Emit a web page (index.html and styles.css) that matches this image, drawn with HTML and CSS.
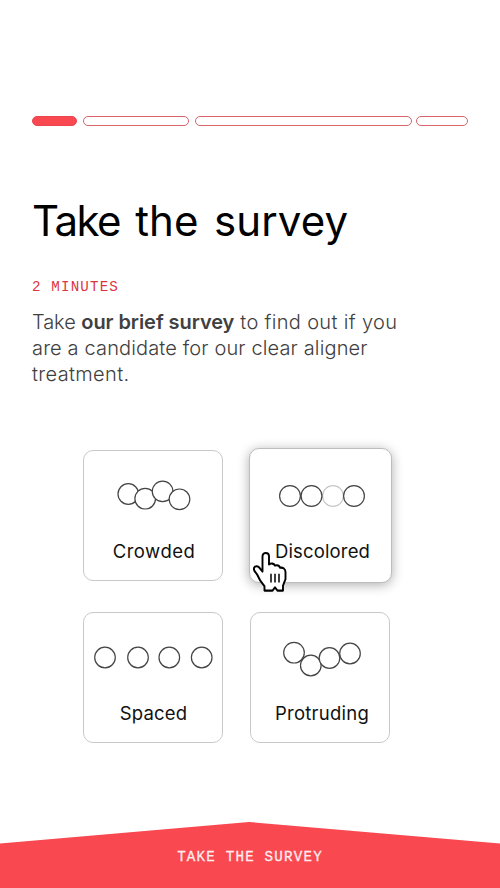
FILE: index.html
```html
<!DOCTYPE html>
<html lang="en">
<head>
<meta charset="utf-8">
<title>Take the survey</title>
<link rel="stylesheet" href="styles.css">
</head>
<body>
<main class="page">
  <div class="progress"><i class="step done"></i><i class="step second"></i><i class="step third"></i><i class="step fourth"></i></div>
  <h1 class="title"><span class="tight">Take</span> the survey</h1>
  <p class="duration">2 MINUTES</p>
  <p class="intro"><span class="line l1"><span class="lead">Take <b>our brief survey</b></span> to find out if you</span><span class="line l2">are a candidate for our clear aligner</span><span class="line l3">treatment.</span></p>
  <div class="options">
    <div class="card">
      <svg class="teeth" viewBox="83 450 140 84"><circle cx="128.3" cy="494" r="10.3"/><circle cx="145.2" cy="498.7" r="10.3"/><circle cx="162.6" cy="491.4" r="10.3"/><circle cx="179.5" cy="499.3" r="10.3"/></svg>
      <span class="label crowded">Crowded</span>
    </div>
    <div class="card active">
      <svg class="teeth" viewBox="249 448 143 86"><circle class="pale" cx="333" cy="496" r="10.4"/><circle cx="290" cy="496" r="10.4"/><circle cx="311.5" cy="496" r="10.4"/><circle cx="354" cy="496" r="10.4"/></svg>
      <span class="label discolored">Discolored</span>
      <svg class="cursor" viewBox="0 0 36 40" preserveAspectRatio="none"><path d="M15.500 35.500V31.500C12 28 10 25 8 20.500L5.500 17.500C3.500 13.500 7.500 12 10 14L13.500 18V4C13.500 0 20 0 20 4V11.500C22 10 25 10.500 26 12.500C29 11.500 30.500 13 31 14.500C34 14 36.500 15.500 36.500 18.500V25L34 31V35.500H28.500L26 32.500L23.500 35.500Z"/><path class="ridges" d="M22 20V28M26 20V28M30 20V28"/></svg>
    </div>
    <div class="card">
      <svg class="teeth" viewBox="83 612 140 84"><circle cx="105" cy="657.5" r="10.3"/><circle cx="138" cy="657.5" r="10.3"/><circle cx="169.3" cy="657.5" r="10.3"/><circle cx="201.7" cy="657.5" r="10.3"/></svg>
      <span class="label spaced">Spaced</span>
    </div>
    <div class="card">
      <svg class="teeth" viewBox="250 612 140 84"><circle cx="294" cy="652.7" r="10.3"/><circle cx="310.8" cy="665.5" r="10.3"/><circle cx="329.5" cy="658" r="10.3"/><circle cx="350" cy="653.5" r="10.3"/></svg>
      <span class="label protruding">Protruding</span>
    </div>
  </div>
  <footer class="cta"><span>TAKE THE SURVEY</span></footer>
</main>
</body>
</html>
```

FILE: styles.css
```css
* { box-sizing: border-box; }
body { margin: 0; background: #fff; font-family: Inter, "Liberation Sans", sans-serif; }
.page { width: 500px; height: 888px; padding-top: 116px; display: flex; flex-direction: column; overflow: hidden; }
.progress { display: flex; height: 10px; padding-left: 32px; flex: none; }
.step { height: 10px; border: 1px solid #d9646c; border-radius: 5px; }
.done { width: 45px; background: #f94850; border-color: #e9464f; margin-right: 6px; }
.second { width: 106px; margin-right: 6px; }
.third { width: 217px; margin-right: 4px; }
.fourth { width: 52px; }
.title { margin: 70px 0 0 32px; font-size: 42px; line-height: 50px; font-weight: 400; letter-spacing: .1px; word-spacing: 3.5px; color: #000; white-space: nowrap; }
.tight { letter-spacing: -1.6px; }
.duration { margin: 33px 0 0 32px; font: 14.2px/16px "Liberation Mono", monospace; letter-spacing: 1.15px; color: #dc3540; }
.intro { margin: 14px 0 0 32px; font-size: 20px; line-height: 26px; font-weight: 300; color: #404040; }
.line { display: block; white-space: nowrap; }
.l1 { letter-spacing: .33px; }
.lead { letter-spacing: -.06px; }
.l2 { letter-spacing: .14px; }
.l3 { letter-spacing: .35px; }
.intro b { font-weight: 600; }
.options { display: grid; grid-template-columns: 140px 140px; grid-template-rows: 131px 131px; gap: 31px 27px; margin: 63px 0 0 83px; }
.card { display: flex; flex-direction: column; border: 1px solid #c9c9c9; border-radius: 10px; background: #fff; align-items: center; }
.active { margin: -2px -2px -2px -1px; position: relative; border-color: #bdbdbd; box-shadow: 0 2px 12px rgba(0,0,0,.32); }
.teeth { width: 140px; height: 84px; margin-top: -1px; flex: none; fill: #fff; stroke: #444; stroke-width: 1.2; }
.active .teeth { width: 143px; height: 86px; }
.teeth .pale { stroke: #c8c8c8; }
.label { font-size: 18.5px; line-height: 24px; color: #111; margin-top: 5px; letter-spacing: .15px; }
.crowded { letter-spacing: .5px; margin-left: 2px; }
.discolored { margin-left: 4px; }
.spaced { margin-left: 1px; }
.protruding { margin-left: 4px; letter-spacing: .25px; }
.cursor { position: absolute; left: -1px; top: 103px; width: 36px; height: 43.5px; overflow: visible; fill: #fff; stroke: #000; stroke-width: 1.9; stroke-linejoin: round; }
.cursor .ridges { stroke-width: 1.5; }
.cta { margin-top: auto; height: 66px; padding-top: 27px; background: #f94850; clip-path: polygon(0 21.500px, 249px 0, 100% 21.500px, 100% 100%, 0 100%); text-align: center; font: 400 14.2px/16px "Liberation Mono", monospace; -webkit-text-stroke: .3px #ffecee; letter-spacing: 1.2px; color: #ffecee; }
```
